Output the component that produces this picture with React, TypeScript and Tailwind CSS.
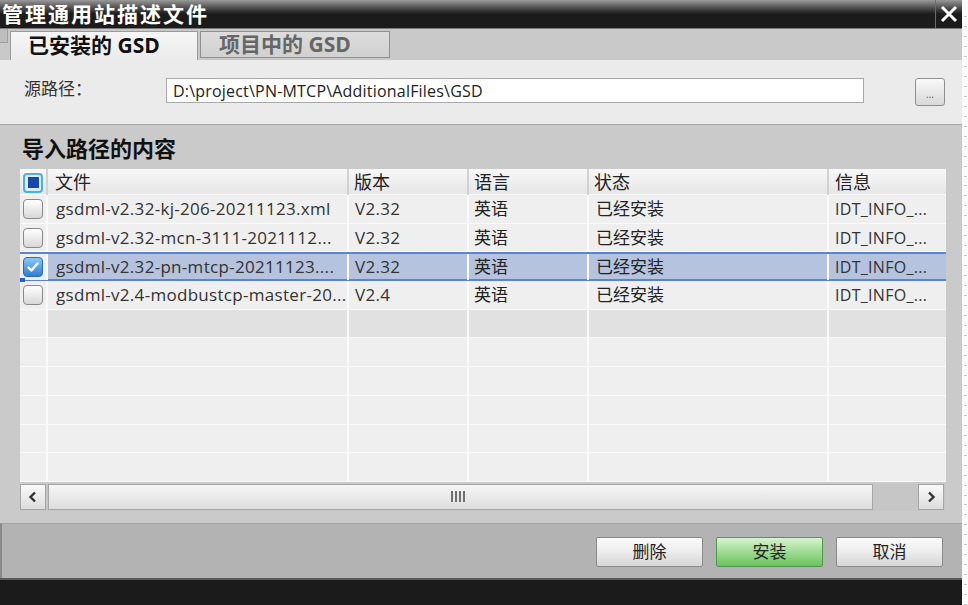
import React from "react";

const FONT = "'Open Sans', 'Noto Sans CJK SC', sans-serif";

type Row = { file: string; ver: string; lang: string; status: string; info: string; checked?: boolean; selected?: boolean };

const rows: Row[] = [
  { file: "gsdml-v2.32-kj-206-20211123.xml", ver: "V2.32", lang: "英语", status: "已经安装", info: "IDT_INFO_..." },
  { file: "gsdml-v2.32-mcn-3111-2021112...", ver: "V2.32", lang: "英语", status: "已经安装", info: "IDT_INFO_..." },
  { file: "gsdml-v2.32-pn-mtcp-20211123....", ver: "V2.32", lang: "英语", status: "已经安装", info: "IDT_INFO_...", checked: true, selected: true },
  { file: "gsdml-v2.4-modbustcp-master-20...", ver: "V2.4", lang: "英语", status: "已经安装", info: "IDT_INFO_..." },
];

const COLS = "grid grid-cols-[28px_301px_120px_120px_240px_117px]";

function Box({ checked }: { checked?: boolean }) {
  if (checked) {
    return (
      <div className="w-[20px] h-[20px] rounded-[4px] border border-[#2e6ab0] bg-gradient-to-b from-[#8cc8f5] to-[#2b7fd4] flex items-center justify-center">
        <svg width="14" height="14" viewBox="0 0 14 14">
          <path d="M2.5 7.5 L5.5 10.5 L11.5 3.5" stroke="#ffffff" strokeWidth="2.4" fill="none" strokeLinecap="round" strokeLinejoin="round" />
        </svg>
      </div>
    );
  }
  return <div className="w-[20px] h-[20px] rounded-[4px] border border-[#8a8a8a] bg-gradient-to-b from-[#ffffff] to-[#d8d8d8]" />;
}

function HeaderBox() {
  return (
    <div className="w-[20px] h-[20px] rounded-[4px] border-2 border-[#4bb0e8] bg-[#d9eefa] flex items-center justify-center">
      <div className="w-[11px] h-[11px] bg-[#1747a8]" />
    </div>
  );
}

function Btn({ label, green }: { label: string; green?: boolean }) {
  return (
    <div
      className={
        "w-[107px] h-[30px] rounded-[2px] border flex items-center justify-center text-[17px] text-[#222] " +
        (green
          ? "border-[#4f9a48] bg-gradient-to-b from-[#d8f3d2] via-[#9ddc92] to-[#6cc25f] text-[#1d3d1a]"
          : "border-[#8a8a8a] bg-gradient-to-b from-[#fbfbfb] via-[#ececec] to-[#d6d6d6]")
      }
    >
      {label}
    </div>
  );
}

export default function App() {
  return (
    <div className="w-[968px] h-[605px] flex overflow-hidden" style={{ fontFamily: FONT }}>
      <div className="w-[962px] h-full flex flex-col bg-[#c9c9c9]">
        {/* Title bar */}
        <div className="h-[29px] flex bg-gradient-to-b from-[#9a9a9a] via-[#1c1c1c] to-[#1b1b1b] border-b border-[#7a7a7a]">
          <div className="flex-1 flex items-center pl-[2px] text-white text-[21px] tracking-[2px] font-bold leading-[26px]">管理通用站描述文件</div>
          <div className="w-[27px] border-l border-[#6a6a6a] flex items-center justify-center">
            <svg width="18" height="18" viewBox="0 0 18 18">
              <path d="M2 2 L16 16 M16 2 L2 16" stroke="#ffffff" strokeWidth="3" />
            </svg>
          </div>
        </div>
        {/* Tabs */}
        <div className="h-[31px] flex items-end bg-[#c9c9c9] relative">
          <div className="absolute left-0 top-0 w-[8px] h-[14px] bg-[#bdbdbd] border-r border-b border-[#a0a0a0]" />
          <div className="ml-[10px] w-[188px] h-[29px] bg-gradient-to-b from-[#f6f6f6] to-[#ebebeb] border-l border-r border-t border-[#9a9a9a] flex items-center pl-[17px] text-[21px] font-bold text-[#111]">
            已安装的 GSD
          </div>
          <div className="ml-[2px] mb-[2px] w-[190px] h-[27px] bg-gradient-to-b from-[#dddddd] to-[#d0d0d0] border border-[#8f8f8f] flex items-center pl-[18px] text-[21px] font-bold text-[#666]">
            项目中的 GSD
          </div>
        </div>
        {/* Path area */}
        <div className="h-[65px] bg-[#ebebeb] border-b border-[#a8a8a8] flex items-center pl-[24px] pb-[3px]">
          <div className="w-[142px] text-[17px] text-[#333] -mt-[3px]">源路径：</div>
          <div className="w-[698px] h-[25px] bg-white border border-[#a9a9a9] flex items-center pl-[6px] text-[16px] text-[#222] tracking-[0.2px]">
            D:\project\PN-MTCP\AdditionalFiles\GSD
          </div>
          <div className="ml-[51px] mt-[3px] w-[30px] h-[28px] rounded-[3px] border border-[#8f8f8f] bg-gradient-to-b from-[#fafafa] to-[#d8d8d8] flex items-end justify-center pb-[6px] text-[10px] leading-none text-[#555]">
            ...
          </div>
        </div>
        {/* Section */}
        <div className="h-[398px] bg-[#cacaca] flex flex-col">
          <div className="h-[44px] flex items-center pl-[22px] pt-[2px] text-[22px] font-bold text-[#111]">导入路径的内容</div>
          <div className="ml-[20px] w-[926px] flex flex-col">
            {/* header */}
            <div className={COLS + " h-[26px] bg-gradient-to-b from-[#f8f8f8] to-[#e6e6e6] border-b border-[#fafafa] text-[18px] text-[#222]"}>
              <div className="flex items-center justify-center border-r-2 border-[#d2d2d2]">
                <HeaderBox />
              </div>
              <div className="flex items-center pl-[7px] border-r-2 border-[#d2d2d2]">文件</div>
              <div className="flex items-center pl-[5px] border-r-2 border-[#d2d2d2]">版本</div>
              <div className="flex items-center pl-[5px] border-r-2 border-[#d2d2d2]">语言</div>
              <div className="flex items-center pl-[5px] border-r-2 border-[#d2d2d2]">状态</div>
              <div className="flex items-center pl-[6px]">信息</div>
            </div>
            {rows.map((r, i) => (
              <div
                key={i}
                className={
                  COLS +
                  " h-[28.7px] text-[17px] tracking-[0.3px] text-[#333] " +
                  (r.selected ? "bg-[#b5c3de] border-y-2 border-[#5d82d4] relative" : "bg-[#efefef] border-b border-[#fafafa]")
                }
              >
                <div className={"flex items-center justify-center border-r-2 border-[#fafafa] " + (r.selected ? "bg-[#efefef]" : "")}>
                  <Box checked={r.checked} />
                </div>
                <div className="flex items-center pl-[8px] border-r-2 border-[#fafafa] whitespace-nowrap overflow-hidden">{r.file}</div>
                <div className="flex items-center pl-[6px] border-r-2 border-[#fafafa]">{r.ver}</div>
                <div className="flex items-center pl-[5px] border-r-2 border-[#fafafa] text-[17px] tracking-normal text-[#222]">{r.lang}</div>
                <div className="flex items-center pl-[7px] border-r-2 border-[#fafafa] text-[17px] tracking-normal text-[#222]">{r.status}</div>
                <div className="flex items-center pl-[6px] text-[16px]">{r.info}</div>
                {r.selected && <div className="absolute left-0 bottom-[-3px] w-[5px] h-[4px] bg-[#2a5fd0]" />}
              </div>
            ))}
            {Array.from({ length: 6 }).map((_, i) => (
              <div key={"e" + i} className={COLS + " h-[28.7px] border-b border-[#fafafa] " + (i === 0 ? "bg-[#e1e1e1]" : "bg-[#efefef]")}>
                <div className="border-r-2 border-[#fafafa] bg-[#efefef]" />
                <div className="border-r-2 border-[#fafafa]" />
                <div className="border-r-2 border-[#fafafa]" />
                <div className="border-r-2 border-[#fafafa]" />
                <div className="border-r-2 border-[#fafafa]" />
                <div />
              </div>
            ))}
            {/* scrollbar */}
            <div className="mt-[2px] h-[27px] flex bg-[#c6c6c6]">
              <div className="w-[26px] h-[26px] border border-[#a5a5a5] bg-gradient-to-b from-[#fafafa] to-[#dcdcdc] flex items-center justify-center">
                <svg width="12" height="12" viewBox="0 0 12 12">
                  <path d="M8 1.5 L3.5 6 L8 10.5" stroke="#333" strokeWidth="2.4" fill="none" />
                </svg>
              </div>
              <div className="ml-[2px] w-[825px] h-[26px] border border-[#a5a5a5] bg-gradient-to-b from-[#f6f6f6] to-[#dddddd] flex items-center justify-center">
                <div className="flex gap-[2px] -ml-[6px]">
                  <div className="w-[2px] h-[11px] bg-[#707070]" />
                  <div className="w-[2px] h-[11px] bg-[#707070]" />
                  <div className="w-[2px] h-[11px] bg-[#707070]" />
                  <div className="w-[2px] h-[11px] bg-[#707070]" />
                </div>
              </div>
              <div className="flex-1" />
              <div className="mr-[2px] w-[26px] h-[26px] border border-[#a5a5a5] bg-gradient-to-b from-[#fafafa] to-[#dcdcdc] flex items-center justify-center">
                <svg width="12" height="12" viewBox="0 0 12 12">
                  <path d="M4 1.5 L8.5 6 L4 10.5" stroke="#333" strokeWidth="2.4" fill="none" />
                </svg>
              </div>
            </div>
          </div>
        </div>
        {/* Footer */}
        <div className="h-[55px] bg-[#b3b3b3] border-t border-[#a3a3a3] border-l-2 border-l-[#8a8a8a] flex items-center justify-end gap-[13px] pr-[19px] pt-[2px]">
          <Btn label="删除" />
          <Btn label="安装" green />
          <Btn label="取消" />
        </div>
        <div className="h-[27px] bg-[#1b1b1b] border-t-2 border-[#5a5a5a]" />
      </div>
      <div className="w-[6px] h-full bg-[#fbfbfb] flex flex-col gap-[9px] pt-[16px] pl-[2px]">
        {Array.from({ length: 60 }).map((_, i) => (
          <div key={i} className="w-[3px] h-[1px] bg-[#c8c8c8]" />
        ))}
      </div>
    </div>
  );
}
